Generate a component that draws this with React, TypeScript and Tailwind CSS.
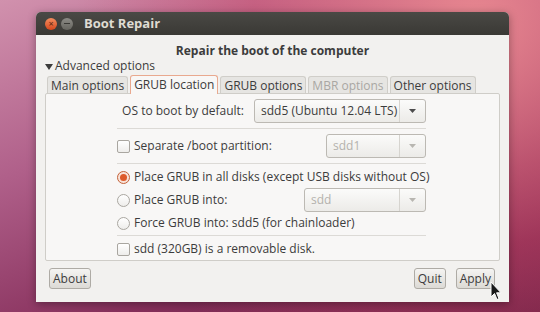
import React from 'react';

const FONT = { fontFamily: '"Open Sans", "Noto Sans", sans-serif' };

function Combo({ text, width, disabled }: { text: string; width: string; disabled?: boolean }) {
  return (
    <div
      className={`flex h-[24px] shrink-0 items-center rounded-[3px] border border-[#bcb9b3] bg-gradient-to-b from-[#fbfbfa] to-[#ecebe8] ${width}`}
    >
      <span className={`flex-1 whitespace-nowrap pl-[6px] text-[12px] ${disabled ? 'text-[#b4b2ad]' : 'text-[#3c3c3c]'}`}>
        {text}
      </span>
      <span className="flex h-full w-[26px] items-center justify-center border-l border-[#d6d4cf]">
        <svg width="7" height="4" viewBox="0 0 7 4">
          <path d="M0 0 L7 0 L3.5 4 Z" fill={disabled ? '#b8b6b1' : '#4c4c4c'} />
        </svg>
      </span>
    </div>
  );
}

function Check() {
  return <span className="h-[13px] w-[13px] shrink-0 rounded-[2px] border border-[#a9a6a0] bg-gradient-to-b from-[#ffffff] to-[#eeedeb]" />;
}

function Radio({ on }: { on?: boolean }) {
  return (
    <span
      className={`flex h-[13px] w-[13px] shrink-0 items-center justify-center rounded-full border ${
        on ? 'border-[#c4623a] bg-[#f7e3d9]' : 'border-[#aaa7a1] bg-gradient-to-b from-[#ffffff] to-[#eeedeb]'
      }`}
    >
      {on && <span className="h-[7px] w-[7px] rounded-full bg-[#dd5a2a]" />}
    </span>
  );
}

function Tab({ label, active, dim }: { label: string; active?: boolean; dim?: boolean }) {
  return (
    <div
      className={`flex items-center whitespace-nowrap rounded-t-[3px] border border-b-0 px-[3px] text-[12px] ${
        active
          ? 'relative z-10 h-[19px] border-[#e9a98f] bg-[#f8f7f6] pb-[1px] text-[#3c3c3c]'
          : 'h-[18px] border-[#d0cec9] bg-[#e6e5e2] ' + (dim ? 'text-[#a9a7a3]' : 'text-[#3c3c3c]')
      }`}
    >
      {label}
    </div>
  );
}

function Btn({ label }: { label: string }) {
  return (
    <div className="flex h-[21px] items-center rounded-[3px] border border-[#aeaba5] bg-gradient-to-b from-[#f5f4f2] to-[#dcdad5] px-[3px] text-[12px] text-[#3c3c3c]">
      {label}
    </div>
  );
}

export default function App() {
  return (
    <div
      className="relative h-[312px] w-[540px] overflow-hidden bg-[linear-gradient(160deg,#d191ad_0%,#b0608a_35%,#87305c_70%,#6a2046_100%)] pl-[36px] pt-[12px]"
      style={FONT}
    >
      <div className="pointer-events-none absolute inset-0 bg-[radial-gradient(circle_at_88%_8%,rgba(238,140,145,0.9),rgba(205,70,100,0.45)_40%,transparent_72%)]" />
      <div className="relative flex h-[290px] w-[473px] flex-col overflow-hidden rounded-t-[5px] bg-[#f2f1ef] shadow-[0_2px_8px_rgba(0,0,0,0.35)]">
        {/* title bar */}
        <div className="flex h-[23px] shrink-0 items-center bg-gradient-to-b from-[#4a4945] to-[#3a3935] pl-[9px]">
          <span className="flex h-[12px] w-[12px] items-center justify-center rounded-full bg-gradient-to-b from-[#f48d5e] to-[#d4461a] text-[9px] leading-none text-[#5a2610]">
            ×
          </span>
          <span className="ml-[4px] flex h-[12px] w-[12px] items-center justify-center rounded-full bg-gradient-to-b from-[#8c8b86] to-[#66655f]">
            <span className="h-[1px] w-[6px] bg-[#3a3935]" />
          </span>
          <span className="ml-[11px] text-[13px] font-bold text-[#dfdbd2]">Boot Repair</span>
        </div>

        <div className="flex flex-1 flex-col px-[9px]">
          <div className="mt-[8px] h-[16px] text-center text-[12px] font-bold leading-[16px] text-[#3c3c3c]">
            Repair the boot of the computer
          </div>
          <div className="flex h-[14px] items-center whitespace-nowrap text-[12px] leading-[14px] text-[#3c3c3c]">
            <svg width="8" height="7" viewBox="0 0 8 7" className="mr-[2px]">
              <path d="M0 1 L8 1 L4 7 Z" fill="#3c3c3c" />
            </svg>
            Advanced options
          </div>

          {/* tabs */}
          <div className="-mb-[1px] mt-[2px] flex h-[19px] items-end gap-[2px] pl-[2px]">
            <Tab label="Main options" />
            <Tab label="GRUB location" active />
            <Tab label="GRUB options" />
            <Tab label="MBR options" dim />
            <Tab label="Other options" />
          </div>

          {/* notebook page */}
          <div className="h-[168px] w-[455px] shrink-0 rounded-[2px] border border-[#cfcdc8] bg-[#f8f7f6] text-[12px] text-[#3c3c3c]">
            <div className="ml-[71px] flex w-[309px] flex-col whitespace-nowrap">
              <div className="mt-[5px] flex items-center justify-end gap-[10px]">
                <span>OS to boot by default:</span>
                <Combo text="sdd5 (Ubuntu 12.04 LTS)" width="w-[172px]" />
              </div>
              <div className="mt-[5px] h-[1px] bg-[#dcdad6]" />
              <div className="mt-[5px] flex items-center">
                <Check />
                <span className="ml-[4px] flex-1">Separate /boot partition:</span>
                <Combo text="sdd1" width="w-[100px]" disabled />
              </div>
              <div className="mt-[5px] h-[1px] bg-[#dcdad6]" />
              <div className="mt-[4px] flex h-[18px] items-center">
                <Radio on />
                <span className="ml-[4px]">Place GRUB in all disks (except USB disks without OS)</span>
              </div>
              <div className="mt-[2px] flex items-center">
                <Radio />
                <span className="ml-[4px] flex-1">Place GRUB into:</span>
                <Combo text="sdd" width="w-[122px]" disabled />
              </div>
              <div className="mt-[2px] flex h-[18px] items-center">
                <Radio />
                <span className="ml-[4px]">Force GRUB into: sdd5 (for chainloader)</span>
              </div>
              <div className="mt-[3px] h-[1px] bg-[#dcdad6]" />
              <div className="mt-[4px] flex h-[18px] items-center">
                <Check />
                <span className="ml-[4px]">sdd (320GB) is a removable disk.</span>
              </div>
            </div>
          </div>

          {/* buttons */}
          <div className="mt-[7px] flex items-center pl-[4px] pr-[5px]">
            <Btn label="About" />
            <div className="flex-1" />
            <Btn label="Quit" />
            <div className="w-[10px]" />
            <Btn label="Apply" />
          </div>
        </div>
      </div>

      {/* mouse pointer */}
      <svg className="absolute left-[490px] top-[281px]" width="12" height="20" viewBox="0 0 12 20">
        <path d="M1 1 L1 16 L4.5 12.5 L7 18.5 L9 17.6 L6.6 11.8 L11 11.8 Z" fill="#1a1a1a" stroke="#ffffff" strokeWidth="1" />
      </svg>
    </div>
  );
}
